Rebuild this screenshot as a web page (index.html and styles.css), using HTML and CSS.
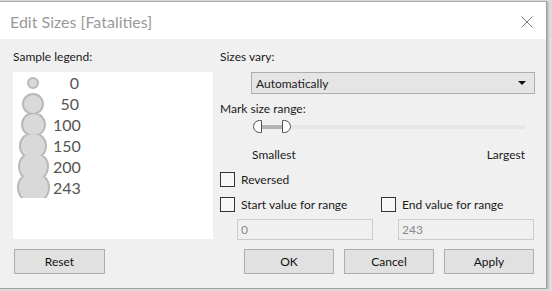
FILE: index.html
```html
<!DOCTYPE html>
<html lang="en">
<head>
    <meta charset="UTF-8">
    <title>Edit Sizes [Fatalities]</title>
    <link rel="stylesheet" href="styles.css">
</head>
<body>
    <div class="dialog">
        <div class="titlebar">
            <span class="title">Edit Sizes [Fatalities]</span>
            <svg class="close" width="12" height="12" viewBox="0 0 12 12">
                <path d="M0.5 0.5 L11.5 11.5 M11.5 0.5 L0.5 11.5" stroke="#7a7a7a" stroke-width="1" fill="none"/>
            </svg>
        </div>
        <div class="dialog-body">
            <div class="columns">
                <div class="left-col">
                    <div class="label">Sample legend:</div>
                    <div class="legend">
                        <div class="legend-row"><div class="dot-cell"><span class="dot" style="width:12px;height:12px"></span></div><span class="num">0</span></div>
                        <div class="legend-row"><div class="dot-cell"><span class="dot" style="width:22px;height:22px"></span></div><span class="num">50</span></div>
                        <div class="legend-row"><div class="dot-cell"><span class="dot" style="width:25px;height:25px"></span></div><span class="num">100</span></div>
                        <div class="legend-row"><div class="dot-cell"><span class="dot" style="width:28px;height:28px"></span></div><span class="num">150</span></div>
                        <div class="legend-row"><div class="dot-cell"><span class="dot" style="width:31px;height:31px"></span></div><span class="num">200</span></div>
                        <div class="legend-row"><div class="dot-cell"><span class="dot" style="width:33px;height:33px"></span></div><span class="num">243</span></div>
                    </div>
                </div>
                <div class="right-col">
                    <div class="label">Sizes vary:</div>
                    <div class="select">
                        <span>Automatically</span>
                        <span class="arrow"></span>
                    </div>
                    <div class="label gap-7">Mark size range:</div>
                    <div class="slider">
                        <div class="track-fill"></div>
                        <span class="handle handle-left"></span>
                        <span class="handle handle-right"></span>
                    </div>
                    <div class="range-labels">
                        <span>Smallest</span>
                        <span>Largest</span>
                    </div>
                    <div class="check-row reversed">
                        <label class="check"><span class="box"></span>Reversed</label>
                    </div>
                    <div class="check-row start-row">
                        <label class="check first"><span class="box"></span>Start value for range</label>
                        <label class="check"><span class="box"></span>End value for range</label>
                    </div>
                    <div class="inputs">
                        <input type="text" value="0" disabled>
                        <input type="text" value="243" disabled>
                    </div>
                </div>
            </div>
            <div class="buttons">
                <button class="reset">Reset</button>
                <div class="spacer"></div>
                <button>OK</button>
                <button>Cancel</button>
                <button>Apply</button>
            </div>
        </div>
    </div>
</body>
</html>
```

FILE: styles.css
```css
body {
    margin: 0;
    padding-top: 1px;
    background: #dcdcdc;
    font-family: Lato, "Open Sans", sans-serif;
    font-size: 12px;
    color: #1a1a1a;
}
.dialog {
    width: 546px;
    height: 286px;
    background: #f0f0f0;
    border-top: 1px solid #aaa;
    border-right: 1px solid #a0a0a0;
    border-bottom: 1px solid #a0a0a0;
    box-shadow: 1px 1px 2px rgba(0,0,0,0.25);
    display: flex;
    flex-direction: column;
}
.titlebar {
    height: 37px;
    background: white;
    display: flex;
    align-items: center;
    justify-content: space-between;
    padding: 0 13px 0 10px;
}
.title {
    font-size: 16px;
    color: #9a9a9a;
    margin-top: 1px;
}
.close {
    display: block;
    margin-top: 2px;
}
.dialog-body {
    padding: 10px 0 0 13px;
}
.columns {
    display: flex;
    gap: 7px;
}
.left-col {
    width: 200px;
}
.right-col {
    width: 315px;
}
.label {
    line-height: 16px;
    height: 16px;
}
.gap-7 {
    margin-top: 7px;
}
.legend {
    margin-top: 7px;
    height: 167px;
    background: white;
}
.legend-row {
    display: flex;
    height: 21px;
}
.dot-cell {
    width: 40px;
    height: 21px;
    overflow: hidden;
    display: flex;
    align-items: center;
    justify-content: center;
}
.dot {
    flex: none;
    box-sizing: border-box;
    border-radius: 50%;
    background: #d9d9d9;
    border: 2px solid #b9b9b9;
}
.num {
    width: 26px;
    text-align: right;
    font-size: 16px;
    line-height: 21px;
    color: #555;
}
.select {
    margin: 7px 0 0 31px;
    width: 284px;
    height: 22px;
    box-sizing: border-box;
    background: #e5e5e5;
    border: 1px solid #adadad;
    display: flex;
    align-items: center;
    justify-content: space-between;
    padding: 0 8px 0 4px;
}
.arrow {
    width: 0;
    height: 0;
    border-left: 4px solid transparent;
    border-right: 4px solid transparent;
    border-top: 4px solid #111;
}
.slider {
    position: relative;
    margin: 3px 0 0 33px;
    width: 272px;
    height: 14px;
    background: linear-gradient(#e6e6e6, #e6e6e6) no-repeat 0 5px / 100% 4px;
}
.track-fill {
    position: absolute;
    left: 5px;
    top: 5px;
    width: 30px;
    height: 4px;
    background: #b4b4b4;
}
.handle {
    position: absolute;
    top: 0;
    width: 9px;
    height: 13px;
    box-sizing: border-box;
    background: white;
    border: 1px solid #555;
}
.handle-left {
    left: 0;
    border-radius: 7px 0 0 7px;
}
.handle-right {
    left: 29px;
    border-radius: 0 7px 7px 0;
}
.range-labels {
    margin: 13px 0 0 32px;
    width: 273px;
    display: flex;
    justify-content: space-between;
    line-height: 16px;
}
.check-row {
    display: flex;
    height: 15px;
}
.reversed {
    margin-top: 9px;
}
.start-row {
    margin-top: 10px;
}
.check {
    display: flex;
    align-items: center;
    gap: 6px;
}
.check.first {
    width: 161px;
}
.box {
    width: 15px;
    height: 15px;
    box-sizing: border-box;
    border: 1px solid #333;
    background: #f7f7f7;
}
.inputs {
    margin: 7px 0 0 17px;
    display: flex;
    gap: 25px;
}
.inputs input {
    width: 136px;
    height: 21px;
    box-sizing: border-box;
    margin: 0;
    padding: 0 3px;
    border: 1px solid #cccccc;
    background: #f0f0f0;
    font-family: Lato, "Open Sans", sans-serif;
    font-size: 12px;
    color: #8a8a8a;
}
.buttons {
    margin-top: 9px;
    display: flex;
    gap: 10px;
    padding-right: 12px;
}
.spacer {
    flex: 1;
}
button {
    width: 90px;
    height: 25px;
    box-sizing: border-box;
    background: #e1e1e1;
    border: 1px solid #adadad;
    font-family: Lato, "Open Sans", sans-serif;
    font-size: 12px;
    color: #111;
    padding: 0;
}
.reset {
    width: 91px;
    margin-left: 1px;
}
```
